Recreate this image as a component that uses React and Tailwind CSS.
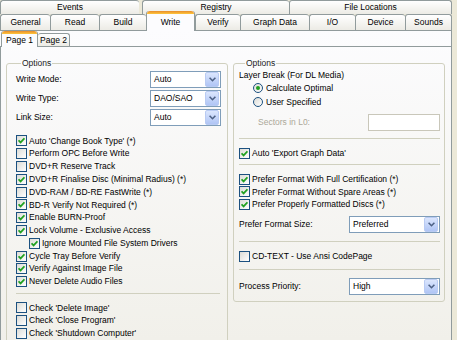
import React from "react";

function Tab({ label, w, active, last }) {
  if (active) {
    return (
      <div
        className={`${w} relative z-10 -mt-[3px] h-[20px] shrink-0 rounded-t-[3px] border-x border-[#919b9c] bg-[#fcfcfe] flex flex-col`}
      >
        <div className="h-[3px] rounded-t-[3px] bg-gradient-to-b from-[#e68b2c] to-[#ffc73c]" />
        <div className="flex-1 flex items-center justify-center">{label}</div>
      </div>
    );
  }
  return (
    <div
      className={`${w} h-full shrink-0 rounded-t-[3px] border-t border-l ${last ? "border-r" : ""} border-[#919b9c] bg-gradient-to-b from-white to-[#ecebe5] flex items-center justify-center`}
    >
      {label}
    </div>
  );
}

function Check({ on }) {
  return (
    <span className="w-[11px] h-[11px] shrink-0 border border-[#1c5180] bg-gradient-to-br from-[#dcdcd7] to-white flex items-center justify-center">
      {on && (
        <svg width="7" height="7" viewBox="0 0 7 7">
          <path d="M0.6 3.3 L2.6 5.4 L6.4 1.3" stroke="#21a121" strokeWidth="1.7" fill="none" />
        </svg>
      )}
    </span>
  );
}

function CheckRow({ on, label, indent }) {
  return (
    <div className={`h-[12.8px] flex items-center gap-[2px] ${indent ? "pl-[13px]" : ""}`}>
      <Check on={on} />
      <span className="whitespace-nowrap">{label}</span>
    </div>
  );
}

function Radio({ on, label }) {
  return (
    <div className="h-[14px] flex items-center gap-[3px] pl-[14px]">
      <span className="w-[10px] h-[10px] shrink-0 rounded-full border border-[#1c5180] bg-gradient-to-br from-[#dcdcd7] to-white flex items-center justify-center">
        {on && <span className="w-[4px] h-[4px] rounded-full bg-[#21a121]" />}
      </span>
      <span>{label}</span>
    </div>
  );
}

function Combo({ value, w }) {
  return (
    <div className={`${w} h-[17px] border border-[#7f9db9] bg-white flex items-center`}>
      <span className="flex-1 pl-[3px]">{value}</span>
      <span className="w-[14px] h-[15px] mr-px rounded-[2px] border border-[#b9cbf3] bg-gradient-to-b from-[#dbe6fd] to-[#b0c5f5] flex items-center justify-center">
        <svg width="7" height="5" viewBox="0 0 7 5">
          <path d="M0.6 0.8 L3.5 3.7 L6.4 0.8" stroke="#4d6185" strokeWidth="1.6" fill="none" />
        </svg>
      </span>
    </div>
  );
}

function Sep({ className }) {
  return <div className={`border-t border-[#d0d0bf] ${className}`} />;
}

export default function App() {
  return (
    <div className="w-[457px] h-[340px] overflow-hidden bg-[#ece9d8] text-[8.5px] text-black font-['Liberation_Sans',Arial,sans-serif]">
      {/* back row of tabs */}
      <div className="h-[14px] flex">
        <Tab label="Events" w="w-[139px]" />
        <div className="w-[3px] shrink-0" />
        <Tab label="Registry" w="w-[147px]" />
        <Tab label="File Locations" w="w-[163px]" last />
      </div>
      {/* front row */}
      <div className="h-[16px] flex">
        <Tab label="General" w="w-[50px]" />
        <Tab label="Read" w="w-[49px]" />
        <Tab label="Build" w="w-[47px]" />
        <Tab label="Write" w="w-[49px]" active />
        <Tab label="Verify" w="w-[45px]" />
        <Tab label="Graph Data" w="w-[69px]" />
        <Tab label="I/O" w="w-[46px]" />
        <Tab label="Device" w="w-[50px]" />
        <Tab label="Sounds" w="w-[47px]" last />
      </div>

      {/* page */}
      <div className="w-[452px] h-[310px] border-t border-r border-[#919b9c] bg-gradient-to-b from-[#fcfcfe] to-[#f1f0ea]">
        <div className="h-[15px] flex items-end">
          <div className="relative z-10 w-[37px] h-[16px] ml-px -mb-px rounded-t-[3px] border-x border-[#919b9c] bg-[#fcfcfe] flex flex-col">
            <div className="h-[3px] rounded-t-[3px] bg-gradient-to-b from-[#e68b2c] to-[#ffc73c]" />
            <div className="flex-1 flex items-center justify-center">Page 1</div>
          </div>
          <div className="w-[32px] h-[13px] rounded-t-[3px] border-t border-r border-[#919b9c] bg-gradient-to-b from-white to-[#ecebe5] flex items-center justify-center">
            Page 2
          </div>
        </div>

        <div className="h-[300px] border-t border-l border-[#919b9c] pt-[10px] pl-[5px] flex gap-[5px]">
          {/* left group */}
          <fieldset className="w-[222px] h-[300px] shrink-0 border border-[#d0d0bf] rounded-[3px] pl-[9px] pr-[6px]">
            <legend className="ml-[5px] px-px leading-[12px] text-[#222]">Options</legend>
            <div className="pt-[2px] flex flex-col gap-[2px]">
              {[
                ["Write Mode:", "Auto"],
                ["Write Type:", "DAO/SAO"],
                ["Link Size:", "Auto"],
              ].map(([l, v]) => (
                <div key={l} className="flex items-center justify-between">
                  <span>{l}</span>
                  <Combo value={v} w="w-[71px]" />
                </div>
              ))}
            </div>
            <div className="mt-[8.5px]">
              <CheckRow on label="Auto 'Change Book Type' (*)" />
              <CheckRow label="Perform OPC Before Write" />
              <CheckRow label="DVD+R Reserve Track" />
              <CheckRow on label="DVD+R Finalise Disc (Minimal Radius) (*)" />
              <CheckRow label="DVD-RAM / BD-RE FastWrite (*)" />
              <CheckRow on label="BD-R Verify Not Required (*)" />
              <CheckRow on label="Enable BURN-Proof" />
              <CheckRow on label="Lock Volume - Exclusive Access" />
              <CheckRow on indent label="Ignore Mounted File System Drivers" />
              <CheckRow on label="Cycle Tray Before Verify" />
              <CheckRow on label="Verify Against Image File" />
              <CheckRow on label="Never Delete Audio Files" />
            </div>
            <Sep className="mt-[4.5px] mr-px" />
            <div className="mt-[8px]">
              <CheckRow label="Check 'Delete Image'" />
              <CheckRow label="Check 'Close Program'" />
              <CheckRow label="Check 'Shutdown Computer'" />
            </div>
          </fieldset>

          {/* right group */}
          <fieldset className="w-[212px] self-start shrink-0 border border-[#d0d0bf] rounded-[3px] pl-[5px] pr-[4px] pb-[6px]">
            <legend className="ml-[6px] px-px leading-[12px] text-[#222]">Options</legend>
            <div className="leading-[12px]">Layer Break (For DL Media)</div>
            <Radio on label="Calculate Optimal" />
            <Radio label="User Specified" />
            <div className="mt-[5px] flex items-center justify-between">
              <span className="pl-[19px] text-[#aca899]">Sectors in L0:</span>
              <div className="w-[72px] h-[17px] border border-[#c9c7ba] bg-white" />
            </div>
            <Sep className="mt-[7px]" />
            <div className="mt-[8px]">
              <CheckRow on label="Auto 'Export Graph Data'" />
            </div>
            <Sep className="mt-[4.5px]" />
            <div className="mt-[7.5px]">
              <CheckRow on label="Prefer Format With Full Certification (*)" />
              <CheckRow on label="Prefer Format Without Spare Areas (*)" />
              <CheckRow on label="Prefer Properly Formatted Discs (*)" />
            </div>
            <div className="mt-[5px] flex items-center justify-between">
              <span>Prefer Format Size:</span>
              <Combo value="Preferred" w="w-[91px]" />
            </div>
            <Sep className="mt-[8px]" />
            <div className="mt-[7.5px]">
              <CheckRow label="CD-TEXT - Use Ansi CodePage" />
            </div>
            <Sep className="mt-[6.5px]" />
            <div className="mt-[8px] flex items-center justify-between">
              <span>Process Priority:</span>
              <Combo value="High" w="w-[91px]" />
            </div>
          </fieldset>
        </div>
      </div>
    </div>
  );
}
